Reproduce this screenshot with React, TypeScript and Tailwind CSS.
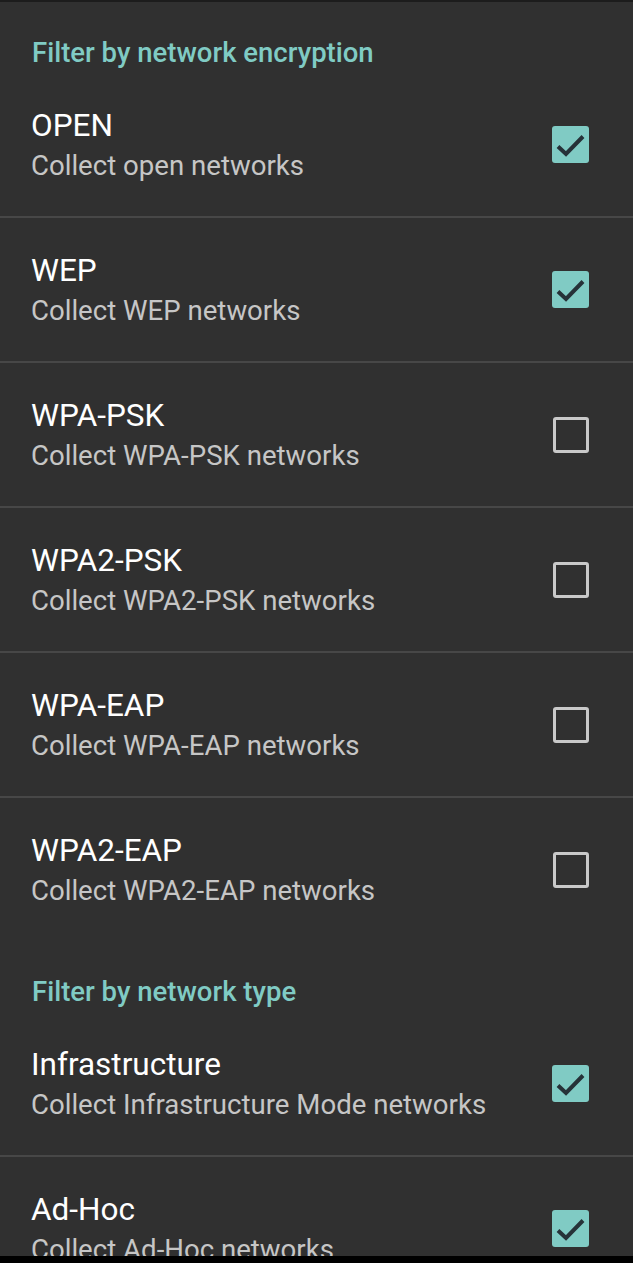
import React from "react";

type Pref = { title: string; summary: string; checked: boolean };

const encryption: Pref[] = [
  { title: "OPEN", summary: "Collect open networks", checked: true },
  { title: "WEP", summary: "Collect WEP networks", checked: true },
  { title: "WPA-PSK", summary: "Collect WPA-PSK networks", checked: false },
  { title: "WPA2-PSK", summary: "Collect WPA2-PSK networks", checked: false },
  { title: "WPA-EAP", summary: "Collect WPA-EAP networks", checked: false },
  { title: "WPA2-EAP", summary: "Collect WPA2-EAP networks", checked: false },
];

const networkType: Pref[] = [
  { title: "Infrastructure", summary: "Collect Infrastructure Mode networks", checked: true },
  { title: "Ad-Hoc", summary: "Collect Ad-Hoc networks", checked: true },
];

function CheckBox({ checked }: { checked: boolean }) {
  if (!checked) {
    return <span className="block size-[36px] rounded-[3px] border-[3px] border-[#c9c9c9]" />;
  }
  return (
    <span className="block size-[37px] rounded-[3px] bg-[#80cbc4]">
      <svg viewBox="0 0 37 37" className="size-full">
        <polyline
          points="6,20.5 14,28 31,10.5"
          fill="none"
          stroke="#263238"
          strokeWidth="4"
        />
      </svg>
    </span>
  );
}

function Header({ children }: { children: React.ReactNode }) {
  return (
    <div className="pl-[32px] pt-[35px] pb-[3px] h-[71px]">
      <p className="text-[27.5px] leading-[32px] font-medium text-[#80cbc4]">{children}</p>
    </div>
  );
}

function Row({ pref, divider }: { pref: Pref; divider: boolean }) {
  return (
    <div className={divider ? "border-b-2 border-[#474747]" : ""}>
      <div className="flex h-[143px] items-center pl-[31px] pr-[44px]">
        <div className="min-w-0 flex-1 pt-[2px]">
          <p className="text-[31.5px] leading-[38px] text-white">{pref.title}</p>
          <p className="mt-[2px] text-[27.6px] leading-[38px] text-[#c6c6c6] whitespace-nowrap">
            {pref.summary}
          </p>
        </div>
        <CheckBox checked={pref.checked} />
      </div>
    </div>
  );
}

export default function App() {
  return (
    <div
      className="flex h-[1263px] w-[633px] flex-col overflow-hidden bg-[#303030]"
      style={{ fontFamily: "Roboto, 'Noto Sans', sans-serif" }}
    >
      <div className="h-[2px] bg-[#1c1c1c]" />
      <div className="flex-1 overflow-hidden">
        <Header>Filter by network encryption</Header>
        {encryption.map((p, i) => (
          <Row key={p.title} pref={p} divider={i < encryption.length - 1} />
        ))}
        <Header>Filter by network type</Header>
        {networkType.map((p, i) => (
          <Row key={p.title} pref={p} divider={i < networkType.length - 1} />
        ))}
      </div>
      <div className="h-[7px] bg-black" />
    </div>
  );
}
